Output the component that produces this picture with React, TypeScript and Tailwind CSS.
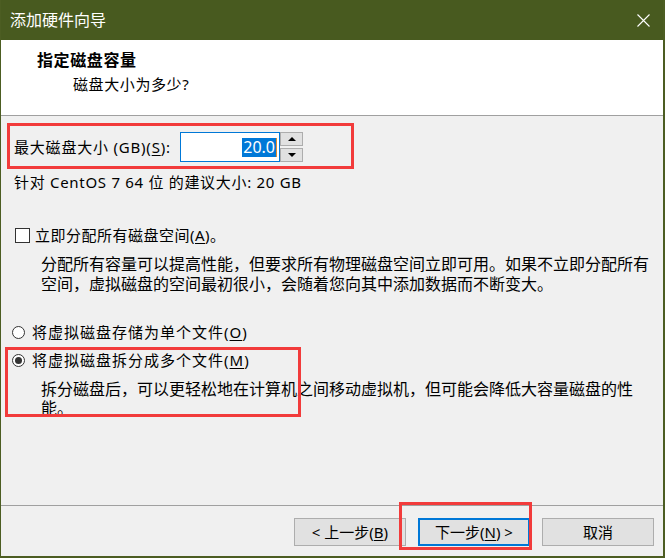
import { type ReactNode } from 'react'

const red = 'absolute border-[3px] border-[#f23b3b] pointer-events-none'

function Key({ children }: { children: ReactNode }) {
  return <span className="underline underline-offset-[2px] decoration-1">{children}</span>
}

function Radio({ checked }: { checked?: boolean }) {
  return (
    <span className="flex h-[13px] w-[13px] shrink-0 items-center justify-center rounded-full border border-[#333] bg-white">
      {checked && <span className="h-[7px] w-[7px] rounded-full bg-[#333]" />}
    </span>
  )
}

function Button({ children, primary }: { children: ReactNode; primary?: boolean }) {
  return (
    <button
      className={
        primary
          ? 'h-[28px] w-[112px] border-2 border-[#0078d7] bg-[#e1e1e1] text-[15px] text-black'
          : 'h-[28px] w-[112px] border border-[#adadad] bg-[#e1e1e1] text-[15px] text-black'
      }
    >
      {children}
    </button>
  )
}

export default function App() {
  return (
    <div className="relative flex h-[558px] w-[665px] flex-col overflow-hidden border-b-2 border-l border-r-2 border-[#4c5d22] bg-[#f0f0f0] font-['Noto_Sans','Noto_Sans_CJK_SC',sans-serif] text-black">
      {/* title bar */}
      <div className="flex h-[40px] shrink-0 items-center justify-between bg-[#485a1f] pl-[9px] pr-[13px]">
        <span className="text-[16px] leading-[20px] text-white">添加硬件向导</span>
        <svg width="13" height="13" viewBox="0 0 13 13" className="text-white">
          <path d="M0.5 0.5 L12.5 12.5 M12.5 0.5 L0.5 12.5" stroke="currentColor" strokeWidth="1.1" />
        </svg>
      </div>

      {/* header */}
      <div className="h-[76px] shrink-0 border-b border-[#a0a0a0] bg-white pl-[36px] pt-[10px]">
        <div className="text-[16px] font-bold leading-[20px] tracking-[0.6px]">指定磁盘容量</div>
        <div className="mt-[4px] pl-[36px] text-[15px] leading-[20px] tracking-[0.6px]">磁盘大小为多少?</div>
      </div>

      {/* body */}
      <div className="flex-1 px-[13px]">
        <div className="mt-[16px] flex h-[30px] items-center">
          <span className="w-[166px] text-[15px] leading-[20px] tracking-[0.8px]">
            最大磁盘大小 (GB)(<Key>S</Key>):
          </span>
          <div className="flex h-[30px] w-[100px] items-center justify-end border border-[#0078d7] bg-white pr-[2px]">
            <span className="bg-[#0078d7] px-[1px] text-[16px] leading-[19px] text-white">20.0</span>
            <span className="h-[19px] w-[1px] bg-[#e08a2a]" />
          </div>
          <div className="flex h-[30px] w-[23px] flex-col justify-between">
            <span className="flex h-[14px] items-center justify-center border border-[#adadad] bg-[#e1e1e1]">
              <svg width="8" height="4" viewBox="0 0 8 4"><path d="M0 4 L4 0 L8 4 Z" fill="#000" /></svg>
            </span>
            <span className="flex h-[14px] items-center justify-center border border-[#adadad] bg-[#e1e1e1]">
              <svg width="8" height="4" viewBox="0 0 8 4"><path d="M0 0 L8 0 L4 4 Z" fill="#000" /></svg>
            </span>
          </div>
        </div>

        <div className="mt-[10px] text-[15px] leading-[20px] tracking-[0.7px]">针对 CentOS 7 64 位 的建议大小: 20 GB</div>

        <div className="mt-[33px] flex h-[20px] items-center gap-[5px]">
          <span className="ml-[1px] h-[15px] w-[15px] shrink-0 border border-[#333] bg-white" />
          <span className="text-[15px] leading-[20px] tracking-[0.5px]">
            立即分配所有磁盘空间(<Key>A</Key>)。
          </span>
        </div>
        <p className="mt-[9px] whitespace-nowrap pl-[27px] text-[16px] leading-[20px]">
          分配所有容量可以提高性能，但要求所有物理磁盘空间立即可用。如果不立即分配所有
          <br />
          空间，虚拟磁盘的空间最初很小，会随着您向其中添加数据而不断变大。
        </p>

        <div className="mt-[28px] flex h-[20px] items-center gap-[7px]">
          <span className="-ml-[2px]"><Radio /></span>
          <span className="text-[15px] leading-[20px] tracking-[1px]">
            将虚拟磁盘存储为单个文件(<Key>O</Key>)
          </span>
        </div>
        <div className="mt-[8px] flex h-[20px] items-center gap-[7px]">
          <span className="-ml-[2px]"><Radio checked /></span>
          <span className="text-[15px] leading-[20px] tracking-[1px]">
            将虚拟磁盘拆分成多个文件(<Key>M</Key>)
          </span>
        </div>
        <p className="mt-[10px] w-[625px] pl-[27px] text-[16px] leading-[19px]">
          拆分磁盘后，可以更轻松地在计算机之间移动虚拟机，但可能会降低大容量磁盘的性能。
        </p>
      </div>

      {/* footer */}
      <div className="flex h-[51px] shrink-0 items-start justify-end gap-[12px] border-t border-[#a0a0a0] pr-[9px] pt-[12px]">
        <Button>&lt; 上一步(<Key>B</Key>)</Button>
        <Button primary>下一步(<Key>N</Key>) &gt;</Button>
        <Button>取消</Button>
      </div>

      {/* red annotation boxes */}
      <div className={`${red} left-[6px] top-[123px] h-[46px] w-[347px]`} />
      <div className={`${red} left-[4px] top-[347px] h-[70px] w-[296px]`} />
      <div className={`${red} left-[398px] top-[502px] h-[48px] w-[133px]`} />
    </div>
  )
}
